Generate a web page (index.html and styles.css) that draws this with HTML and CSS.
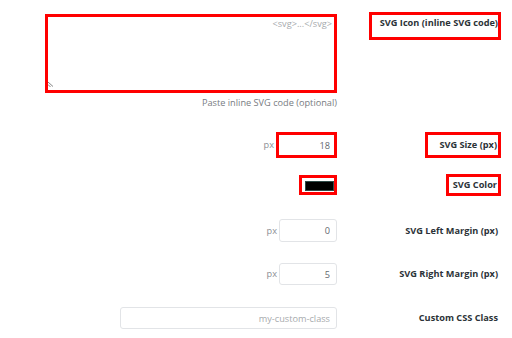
FILE: index.html
```html
<!DOCTYPE html>
<html lang="en">
<head>
    <meta charset="UTF-8">
    <meta name="viewport" content="width=device-width, initial-scale=1.0">
    <title>SVG Icon Settings</title>
    <link rel="stylesheet" href="styles.css">
</head>
<body>
    <div class="settings">
        <div class="row row-icon">
            <div class="field">
                <div class="area-wrap">
                    <textarea class="svg-code marked" placeholder="<svg>...</svg>"></textarea>
                    <svg class="grip" width="6" height="5" viewBox="0 0 6 5"><path d="M0 0L5 4.5M0 2.5L2.5 5" stroke="#666" stroke-width="0.8"/></svg>
                </div>
            </div>
            <div class="label"><span class="tag tag-icon">SVG Icon (inline SVG code)</span></div>
        </div>
        <div class="help">Paste inline SVG code (optional)</div>

        <div class="row row-size">
            <div class="field">
                <span class="unit">px</span>
                <input class="num marked" type="text" value="18">
            </div>
            <div class="label"><span class="tag tag-size">SVG Size (px)</span></div>
        </div>

        <div class="row row-color">
            <div class="field">
                <div class="swatch marked"><span class="swatch-fill"></span></div>
            </div>
            <div class="label"><span class="tag tag-color">SVG Color</span></div>
        </div>

        <div class="row row-left">
            <div class="field">
                <span class="unit">px</span>
                <input class="num" type="text" value="0">
            </div>
            <div class="label">SVG Left Margin (px)</div>
        </div>

        <div class="row row-right">
            <div class="field">
                <span class="unit">px</span>
                <input class="num" type="text" value="5">
            </div>
            <div class="label">SVG Right Margin (px)</div>
        </div>

        <div class="row row-class">
            <div class="field">
                <input class="wide" type="text" placeholder="my-custom-class">
            </div>
            <div class="label">Custom CSS Class</div>
        </div>
    </div>
</body>
</html>
```
FILE: styles.css
```css
body { margin: 0; background: #fff; font-family: "Open Sans", "Noto Sans", sans-serif;
       font-size: 9.2px; color: #2c3338; }
.settings { padding: 14px 0 0 45px; }
.row { display: flex; align-items: center; }
.field { width: 292px; display: flex; justify-content: flex-end; align-items: center; }
.label { width: 161px; text-align: right; font-weight: 700; line-height: 12px; }
.tag { display: inline-block; outline: 3px solid #f00; }

/* textarea row */
.row-icon { align-items: flex-start; }
.area-wrap { position: relative; }
.svg-code { display: block; box-sizing: border-box; width: 292px; height: 79px; margin: 0;
            border: 3px solid #f00; padding: 1px 2px; resize: none; text-align: right;
            font: 9.2px/12px "Open Sans", sans-serif; }
.svg-code::placeholder { color: #a7aaad; }
.grip { position: absolute; left: 3px; bottom: 6px; }
.tag-icon { margin-top: 1px; padding: 2px 0 8px 8px; }
.help { width: 292px; margin-top: 4px; text-align: right; color: #787c82; line-height: 12px; }

/* inputs */
.unit { color: #8c8f94; margin-right: 2px; line-height: 12px; }
input { box-sizing: border-box; margin: 0; height: 22px; border: 1px solid #e2e4e7;
        border-radius: 3px; padding: 0 6px; text-align: right; color: #646970;
        font: 9.2px "Open Sans", sans-serif; background: #fff; }
input::placeholder { color: #a7aaad; }
.num { width: 58px; }
.wide { width: 217px; }
.num.marked { width: 61px; height: 26px; border: 3px solid #f00; border-radius: 0; padding-right: 4px; }

.row-size { margin-top: 23px; }
.tag-size { padding: 4px 1px 4px 11px; }

/* colour */
.row-color { margin-top: 17px; }
.swatch { box-sizing: border-box; width: 38px; height: 20px; border: 3px solid #f00;
          padding: 3px 0 1px 3px; display: flex; }
.swatch-fill { flex: 1; background: #000; border: 1px solid #2e4a48; }
.tag-color { padding: 2px 1px 2px 4px; }

.row-left { margin-top: 24px; }
.row-left input { height: 23px; }
.row-right { margin-top: 21px; }
.row-class { margin-top: 22px; }
```
